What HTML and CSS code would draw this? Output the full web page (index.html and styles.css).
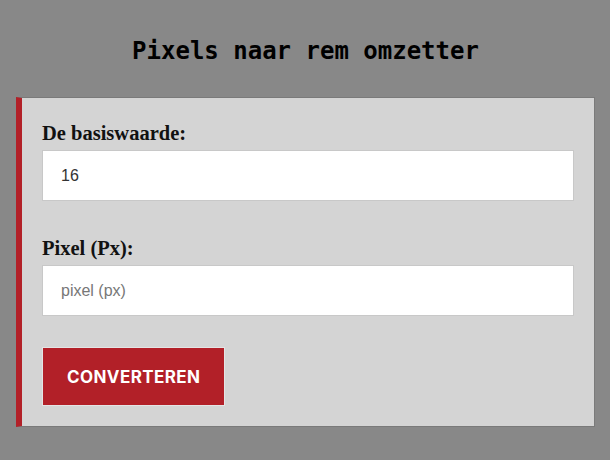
FILE: index.html
```html
<!DOCTYPE html>
<html lang="nl">
<head>
<meta charset="utf-8">
<title>Pixels naar rem omzetter</title>
<link rel="stylesheet" href="styles.css">
</head>
<body>
  <h1 class="title">Pixels naar rem omzetter</h1>
  <div class="card">
    <div class="field">
      <label class="label" for="base">De basiswaarde:</label>
      <input class="input" id="base" type="text" value="16">
    </div>
    <div class="field">
      <label class="label" for="px">Pixel (Px):</label>
      <input class="input" id="px" type="text" placeholder="pixel (px)">
    </div>
    <button class="btn" type="button">CONVERTEREN</button>
  </div>
</body>
</html>
```

FILE: styles.css
```css
html, body {
  margin: 0;
  padding: 0;
}
body {
  background: #888888;
  padding: 37px 15px 0 16px;
  height: 460px;
  box-sizing: border-box;
}
.title {
  margin: 0 0 32px;
  font-family: "DejaVu Sans Mono", "Liberation Mono", monospace;
  font-weight: bold;
  font-size: 24px;
  line-height: 28px;
  text-align: center;
  color: #000;
}
.card {
  background: #d4d4d4;
  border: 1px solid #7a7a7a;
  border-left: 6px solid #b22028;
  padding: 23px 20px 20px 20px;
  display: flex;
  flex-direction: column;
}
.field {
  display: flex;
  flex-direction: column;
  gap: 5px;
  margin-bottom: 35px;
}
.field + .field {
  margin-bottom: 31px;
}
.label {
  font-family: "Liberation Serif", serif;
  font-weight: bold;
  font-size: 20.5px;
  line-height: 24px;
  color: #111;
}
.input {
  height: 51px;
  box-sizing: border-box;
  border: 1px solid #c8c8c8;
  background: #fff;
  padding: 0 18px;
  font-family: "Liberation Sans", Arial, sans-serif;
  font-size: 16px;
  color: #333;
  outline: none;
}
.input::placeholder {
  color: #777;
}
.btn {
  align-self: flex-start;
  height: 59px;
  padding: 0 24px;
  border: 1px solid #e4e4e4;
  background: #b22028;
  color: #fff;
  font-family: Inter, "Liberation Sans", sans-serif;
  font-weight: 700;
  font-size: 17px;
  letter-spacing: 0.4px;
}
```
